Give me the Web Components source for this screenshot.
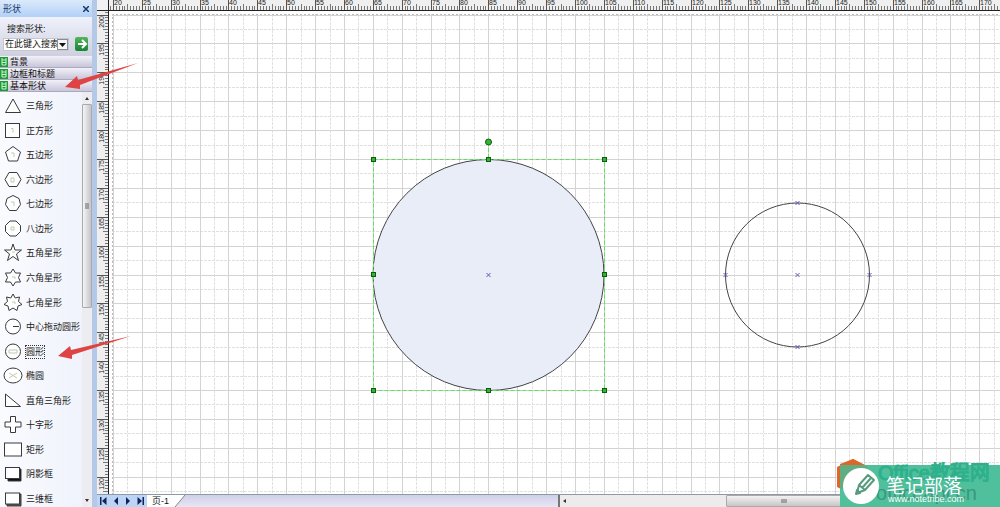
<!DOCTYPE html>
<html lang="zh-CN">
<head>
<meta charset="utf-8">
<title>形状</title>
<style>
html,body{margin:0;height:100%;overflow:hidden}
body{font-family:"Liberation Sans","Noto Sans CJK SC",sans-serif;font-size:9px;line-height:12px;color:#222}
</style>
</head>
<body>
<draw-app></draw-app>
<script>
const define = (name, html, setup) => customElements.define(name, class extends HTMLElement {
  connectedCallback() {
    if (this.shadowRoot) return;
    const t = document.createElement('template');
    t.innerHTML = html;
    this.attachShadow({mode: 'open'}).append(t.content.cloneNode(true));
    if (setup) setup(this, this.shadowRoot);
  }
});

const ICONS = {
  triangle: '<path d="M9 3L16.500 16.500H1.500Z"/>',
  square: '<rect x="1.500" y="2.500" width="14" height="14"/><path class="f" d="M7 7.500h2v4"/>',
  penta: '<path d="M9 1.500L16.500 7L13.500 16H4.500L1.500 7Z"/><path class="f" d="M7 8h3v4"/>',
  hexa: '<path d="M5 2.500H13L17 9.500L13 16.500H5L1 9.500Z"/><path class="f" d="M7 8h3v4h-3z"/>',
  hepta: '<path d="M9 1.500L15 4.500L16.500 10.500L12.500 16.500H5.500L1.500 10.500L3 4.500Z"/><path class="f" d="M7 8h3v4"/>',
  octa: '<path d="M6 2H12L16.500 6.500V12.500L12 17H6L1.500 12.500V6.500Z"/><path class="f" d="M7 8h3v3h-3z"/>',
  star5: '<path d="M9 1L11 7H17.500L12.500 11L14.500 17.500L9 13.500L3.500 17.500L5.500 11L.5 7H7Z"/><path class="f" d="M8 9h3"/>',
  star6: '<path d="M9 1L11.500 5L16.500 5L14.500 9.500L16.500 14H11.500L9 18L6.500 14H1.500L3.500 9.500L1.500 5H6.500Z"/><path class="f" d="M8 9h3v2"/>',
  star7: '<path d="M9 1L11.200 5L15.500 4L14.500 8.500L18 11.500L14 13L13 17.500L9 15L5 17.500L4 13L0 11.500L3.500 8.500L2.500 4L6.800 5Z"/><path class="f" d="M8 9h3v2"/>',
  radius: '<circle cx="9" cy="9.500" r="7.500"/><path d="M9 9.500h6"/>',
  circle: '<circle cx="9" cy="9.500" r="7.500"/><path class="f" d="M5 8h8v3h-8z"/>',
  ellipse: '<ellipse cx="9" cy="9.500" rx="9" ry="7.500"/><path class="f" d="M5 7l8 5M5 12l8-5"/>',
  right: '<path d="M1.500 3L16.500 15.500H1.500Z"/>',
  cross: '<path d="M6.500 1.500h5v5.500h5.500v5h-5.500v5.500h-5v-5.500h-5.500v-5h5.500z"/>',
  rect: '<rect x=".5" y="3" width="17" height="13"/>',
  shadow: '<path style="fill:#111" d="M4 5h13v12h-13z"/><rect x="1.500" y="3.500" width="14" height="11"/>',
  box: '<path style="fill:#555" d="M3 5h14v12h-14z"/><rect x="1.500" y="4" width="14" height="11"/>'
};

define('shape-item', `<style>
:host{display:flex;flex:1;min-height:24px;align-items:center}
button{all:unset;display:flex;align-items:center;gap:3px;white-space:nowrap}
svg{display:block;width:20px;height:20px;overflow:visible;fill:#fff;stroke:#3a3a3a;stroke-width:1}
.f{stroke:#c3c9b4;fill:none}
:host([selected]) span{outline:1px dotted #333}
</style><button><svg viewBox="-1 0 20 20"></svg><span><slot></slot></span></button>`,
(h, r) => { r.querySelector('svg').innerHTML = ICONS[h.getAttribute('icon')]; });

define('stencil-header', `<style>
:host{display:block}
button{all:unset;box-sizing:border-box;width:100%;height:12px;display:flex;align-items:center;gap:2px;white-space:nowrap;color:#111;background:linear-gradient(#f2f0f8,#c8c6d8);border-bottom:1px solid #aaa9bd}
svg{width:8px;height:10px;display:block}
</style><button><svg viewBox="0 0 8 10"><rect width="8" height="10" fill="#1d9a3b"/><path d="M2 1v7h4M2 3h4M2 5.500h4M6 1v7" stroke="#cdf5cd" fill="none"/></svg><span><slot></slot></span></button>`);

define('scroll-bar', `<style>
:host{display:flex;box-sizing:border-box}
:host([vertical]){flex-direction:column;width:10px;background:#ececf1}
.arrow{all:unset;flex:none;width:10px;height:12px;display:grid;place-items:center}
svg{width:6px;height:6px;fill:#333}
.track{flex:1;display:flex}
:host([vertical]) .track{flex-direction:column}
.space{flex:var(--before,0)}
.rest{flex:var(--after,1)}
.thumb{flex:var(--thumb,1);box-sizing:border-box;border:1px solid #aaa;border-radius:1px;background:linear-gradient(#f2f2f2,#c7c7c9);display:grid;place-items:center}
:host([vertical]) .thumb{background:linear-gradient(90deg,#f5f5f5,#c4c5cb)}
</style>
<button class="arrow" aria-label="后退"><svg viewBox="0 0 6 6"><path id="a" d="M4 1v4L1 3z"/></svg></button>
<div class="track"><div class="space"></div><div class="thumb"><svg viewBox="0 0 6 6"><path fill="none" stroke="#666" id="g" d="M1 1v4M3 1v4M5 1v4"/></svg></div><div class="rest"></div></div>
<button class="arrow" aria-label="前进"><svg viewBox="0 0 6 6"><path id="b" d="M2 1v4L5 3z"/></svg></button>`,
(h, r) => {
  if (!h.hasAttribute('vertical')) return;
  r.getElementById('a').setAttribute('d', 'M3 2L5 5H1z');
  r.getElementById('b').setAttribute('d', 'M3 4L1 1H5z');
  r.getElementById('g').setAttribute('d', 'M1 1h4M1 3h4M1 5h4');
});

define('search-panel', `<style>
:host{display:flex;flex-direction:column;gap:2px;padding:6px 4px 5px 3px;background:linear-gradient(#eff1fb,#cfd0df)}
label{padding-left:4px;color:#222}
.row{display:flex;align-items:center;gap:6px}
.combo{flex:none;width:66px;display:flex;box-sizing:border-box;height:13px;background:#fff;border:1px solid #c4c6d2}
input{flex:1;min-width:0;border:0;padding:0 0 0 1px;background:transparent;font:inherit;color:#111;outline:0}
button{all:unset;display:grid;place-items:center}
.drop{width:11px;box-sizing:border-box;border:1px solid #8b8d96;background:#f6f6f8}
.go{width:14px;height:14px;border-radius:2px;background:linear-gradient(#55b45a,#178433)}
svg{display:block}
</style>
<label for="q">搜索形状:</label>
<div class="row"><div class="combo"><input id="q" value="在此键入搜索"><button class="drop" aria-label="展开"><svg width="7" height="5"><path d="M0 1h7L3.500 5z" fill="#111"/></svg></button></div>
<button class="go" aria-label="搜索"><svg width="12" height="12"><path d="M2 6h8M6 2l4 4-4 4" stroke="#fff" stroke-width="2" fill="none"/></svg></button></div>`);

define('shapes-pane', `<style>
:host{display:flex;flex-direction:column;box-sizing:border-box;min-height:0;border-right:5px solid #b4c9e8;background:#f3f5fd}
header{display:flex;justify-content:space-between;align-items:center;height:17px;flex:none;padding:0 3px;color:#14396e;background:linear-gradient(#dbeafc,#b2d0f6);box-sizing:border-box}
header button{all:unset;display:block}
svg{display:block}
.body{flex:1;display:flex;min-height:0;overflow:hidden}
.list{flex:1;min-width:0;display:flex;flex-direction:column;margin-bottom:-4px;padding:2px 0 0 3px;background:linear-gradient(90deg,#fafbff,#f0f3fc)}
</style>
<header><span>形状</span><button aria-label="关闭"><svg width="6" height="6"><path d="M0 0l6 6M6 0L0 6" stroke="#14396e" stroke-width="1.500"/></svg></button></header>
<search-panel></search-panel>
<stencil-header>背景</stencil-header><stencil-header>边框和标题</stencil-header><stencil-header>基本形状</stencil-header>
<div class="body"><div class="list">
<shape-item icon="triangle">三角形</shape-item><shape-item icon="square">正方形</shape-item><shape-item icon="penta">五边形</shape-item><shape-item icon="hexa">六边形</shape-item><shape-item icon="hepta">七边形</shape-item><shape-item icon="octa">八边形</shape-item><shape-item icon="star5">五角星形</shape-item><shape-item icon="star6">六角星形</shape-item><shape-item icon="star7">七角星形</shape-item><shape-item icon="radius">中心拖动圆形</shape-item><shape-item icon="circle" selected>圆形</shape-item><shape-item icon="ellipse">椭圆</shape-item><shape-item icon="right">直角三角形</shape-item><shape-item icon="cross">十字形</shape-item><shape-item icon="rect">矩形</shape-item><shape-item icon="shadow">阴影框</shape-item><shape-item icon="box">三维框</shape-item>
</div><scroll-bar vertical style="--before:0;--thumb:52;--after:48"></scroll-bar></div>`);

/* Five ruler units take 28.88 pixels; X0 and Y0 are the first labelled marks. */
const STEP = 28.88, X0 = 3.9, Y0 = 3.6;

define('ruler-bar', `<style>
:host{display:block;min-width:0;min-height:0;overflow:hidden;background:#efefef}
:host([vertical]){border-right:1px solid #222}
:host(:not([vertical])){border-bottom:1px solid #222}
svg{display:block;width:100%;height:100%}
path{stroke:#777;fill:none}
.major{stroke:#555}
text{font-size:7px;fill:#222}
</style><svg></svg>`, (h, r) => {
  const v = h.hasAttribute('vertical');
  const draw = () => {
    const length = v ? innerHeight - 24 : innerWidth - 109;
    let minor = '', major = '', text = '';
    for (let i = -1; i * STEP < length; i++) {
      const p = (v ? Y0 : X0) + i * STEP;
      for (let k = 1; k < 10; k++) {
        const q = Math.round(p + k * STEP / 10) + .5, s = k === 5 ? 6 : 8;
        minor += v ? `M${s} ${q}H12` : `M${q} ${s - 2}V11`;
      }
      const m = Math.round(p) + .5;
      major += v ? `M0 ${m}H12` : `M${m} 0V11`;
      if (i < 0 || p + 14 > length) continue;
      text += v ? `<text text-anchor="end" transform="translate(7 ${Math.round(p) + 1}) rotate(-90)">${200 - i * 5}</text>`
                : `<text x="${Math.round(p) + 1}" y="5">${20 + i * 5}</text>`;
    }
    r.querySelector('svg').innerHTML = `<path d="${minor}"/><path class="major" d="${major}"/>${text}`;
  };
  draw();
  addEventListener('resize', draw);
});

define('drawing-canvas', `<style>
:host{display:block;min-height:0;overflow:hidden;background:#fff}
svg{display:block;width:100%;height:100%}
.minor{stroke:#e0e0e0;stroke-dasharray:3 1}
.major{stroke:#d3d3d3}
.edge{stroke:#bbb;stroke-dasharray:2 2}
path,line{fill:none}
.shape{stroke:#444;stroke-width:1}
.sel{fill:none;stroke:#5fe05f;stroke-dasharray:4 2}
.handle{fill:#35b135;stroke:#075f0c;stroke-width:1}
.point{stroke:#5c5cb8;fill:none}
</style><svg><g id="grid"></g><g transform="translate(-109 -11)" id="objects"></g></svg>`, (h, r) => {
  let a = '', b = '';
  for (let i = 0; i < 140; i++) {
    const x = Math.round(X0 + i * STEP / 2) + .5, y = Math.round(Y0 + i * STEP / 2) + .5;
    const d = `M${x} 3V3000M3 ${y}H3000`;
    if (i % 2) a += d; else b += d;
  }
  r.getElementById('grid').innerHTML = `<path class="minor" d="${a}"/><path class="major" d="${b}"/><path class="edge" d="M3.500 2000V3.500H2000"/>`;
  const cross = (x, y) => `M${x - 2} ${y - 2}l4 4m0-4l-4 4`;
  let o = '<circle class="shape" cx="488.500" cy="275" r="115.500" fill="#e8edf8"/><rect class="sel" x="373.500" y="159.500" width="231" height="231"/><path class="sel" d="M488.500 142v17"/>';
  for (const x of [373, 488, 604]) for (const y of [159, 274, 390])
    if (x !== 488 || y !== 274) o += `<rect class="handle" x="${x - 2}.5" y="${y - 2}.5" width="4" height="4"/>`;
  o += '<circle class="handle" cx="488.500" cy="142" r="3"/><circle class="shape" cx="797.500" cy="275" r="72" fill="none"/>';
  o += `<path class="point" d="${cross(488.5, 275)}${cross(797.5, 275)}${cross(725.5, 275)}${cross(869.5, 275)}${cross(797.5, 203)}${cross(797.5, 347)}"/>`;
  r.getElementById('objects').innerHTML = o;
});

define('page-bar', `<style>
:host{display:flex;background:#ececec;border-top:1px solid #8f97a8;box-sizing:border-box}
nav{display:flex;align-items:stretch;flex:none;width:50px;background:#bdd4f4}
nav button{all:unset;flex:1;display:grid;place-items:center}
svg{display:block}
nav svg{width:8px;height:8px;fill:#10245c}
.tabs{flex:1;display:flex;background:linear-gradient(#cfcfe8,#e8e6f5);border-right:2px solid #777}
.tab{all:unset;padding:0 4px 0 5px;background:#fff;color:#111;line-height:12px}
.slope{width:12px;height:12px}
scroll-bar{flex:1.070}
</style>
<nav><button aria-label="首页"><svg viewBox="0 0 8 8"><path d="M1 0h1.500v8H1zM7.500 0v8L3 4z"/></svg></button><button aria-label="上一页"><svg viewBox="0 0 8 8"><path d="M6 0v8L2 4z"/></svg></button><button aria-label="下一页"><svg viewBox="0 0 8 8"><path d="M2 0v8L6 4z"/></svg></button><button aria-label="末页"><svg viewBox="0 0 8 8"><path d="M.5 0v8L5 4zM5.500 0H7v8H5.500z"/></svg></button></nav>
<div class="tabs"><button class="tab">页-1</button><svg class="slope" viewBox="0 0 12 12"><path d="M0 0H12L2 12H0z" fill="#fff"/><path d="M12 0L2 12" stroke="#888"/></svg></div>
<scroll-bar style="--before:37;--thumb:27;--after:35"></scroll-bar>`);

define('site-badge', `<style>
:host{display:block;width:163px;height:48px}
svg{display:block;width:100%;height:100%}
.site{font-size:20px}
.name{font-size:19px;fill:#fff}
.url{font-size:9px;fill:#fff}
</style><svg viewBox="837 459 163 48">
<path d="M853 459l15 8v20l-15 8-16-8v-20z" fill="#df662b"/>
<rect x="840" y="465" width="160" height="42" fill="#4fc09b"/>
<path d="M840 466l13-7 15 8v20l-15 8-13-7z" fill="#729a63" opacity=".5"/>
<path d="M840 465v-1l13-5 12 6z" fill="#df662b"/>
<text class="site" x="878" y="480" fill="#2eb08c" stroke="#2eb08c">Office教程网</text>
<text class="site" x="876" y="500" fill="#3b977e">officeapi.cn</text>
<circle cx="861" cy="486" r="18" fill="#fff"/>
<g fill="none" stroke="#569b7d" stroke-width="2" stroke-linejoin="round"><path d="M857 493l2-8 9-10 6 5-9 10zM859 485l6 5M862 488l9-10"/><path fill="#569b7d" d="M856 494l1-4 3 3z"/></g>
<text class="name" x="886" y="493">笔记部落</text><text class="url" x="888" y="502">www.notetribe.com</text></svg>`);

define('pointer-arrows', `<style>:host{display:block;width:140px;height:300px}svg{display:block;width:100%;height:100%;fill:#df4444}</style>
<svg viewBox="0 60 140 300"><path d="M65 87L77 76 78 80 138 63 80 85 80 89z"/><path d="M58 356L70 346 71 350 131 336 72 355 72 359z"/></svg>`);

define('draw-app', `<style>
:host{display:grid;grid-template-columns:97px minmax(0,1fr);height:100vh;position:relative;overflow:hidden}
main{display:grid;grid-template-columns:12px minmax(0,1fr);grid-template-rows:11px minmax(0,1fr) 13px;min-height:0}
.corner{background:#f0f0f5;border-right:1px solid #222;border-bottom:1px solid #222}
page-bar{grid-column:1/-1}
pointer-arrows{position:absolute;left:0;top:60px;pointer-events:none}
site-badge{position:absolute;right:0;bottom:0}
</style><shapes-pane></shapes-pane>
<main><div class="corner"></div><ruler-bar></ruler-bar><ruler-bar vertical></ruler-bar><drawing-canvas></drawing-canvas><page-bar></page-bar></main>
<pointer-arrows></pointer-arrows><site-badge></site-badge>`);
</script>
</body>
</html>
